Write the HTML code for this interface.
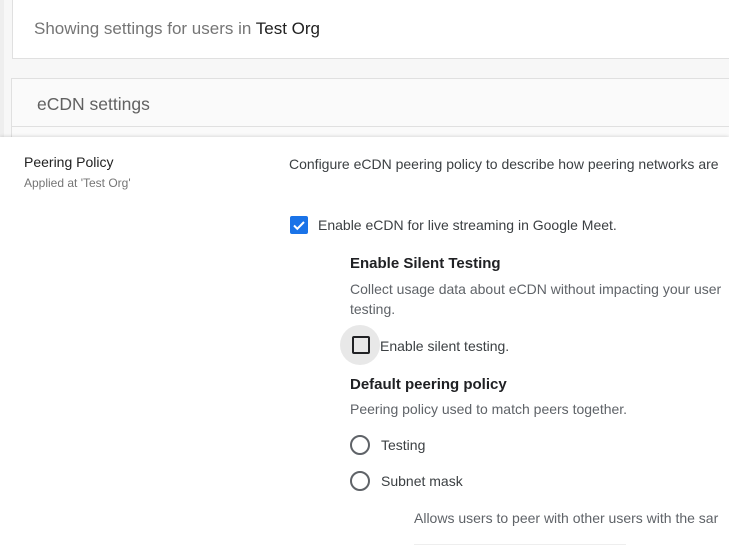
<!DOCTYPE html>
<html><head><style>
body{margin:0;width:729px;height:547px;overflow:hidden;background:#f7f7f7;font-family:"Liberation Sans",Roboto,sans-serif;position:relative}
.edge{position:absolute;left:0;top:0;width:4px;height:140px;background:#eeeeee}
.card1{position:absolute;left:12px;top:-1px;width:730px;height:58px;background:#fff;border:1px solid #e0e0e0}
.card1 span{position:absolute;left:21px;top:19px;font-size:17px;color:#757575}
.card1 b{font-weight:normal;color:#212121}
.card2{position:absolute;left:11px;top:78px;width:730px;height:80px;background:#fafafa;border:1px solid #e0e0e0}
.card2 .h{position:absolute;left:25px;top:15px;font-size:17.5px;color:#616161}
.card2 .line{position:absolute;left:0;top:47px;width:100%;border-top:1px solid #e0e0e0}
.panel{position:absolute;left:0;top:137px;width:729px;height:420px;background:#fff;box-shadow:0 -1px 3px rgba(0,0,0,.12)}
.t{position:absolute;white-space:nowrap}
</style></head><body>
<div class="edge"></div>
<div class="card1"><span>Showing settings for users in <b>Test Org</b></span></div>
<div class="card2"><div class="h">eCDN settings</div><div class="line"></div></div>
<div class="panel">
<div class="t" style="left:24px;top:17px;font-size:14px;color:#212121">Peering Policy</div>
<div class="t" style="left:24px;top:39px;font-size:12px;color:#757575">Applied at 'Test Org'</div>
<div class="t" style="left:289px;top:19px;font-size:14px;color:#3c4043">Configure eCDN peering policy to describe how peering networks are</div>
<div style="position:absolute;left:290px;top:79px;width:18px;height:18px;background:#1a73e8;border-radius:2px">
<svg width="18" height="18"><path d="M4 9.5l3.3 3.3L14 6" fill="none" stroke="#fff" stroke-width="2"/></svg></div>
<div class="t" style="left:318px;top:80px;font-size:14px;color:#3c4043">Enable eCDN for live streaming in Google Meet.</div>
<div class="t" style="left:350px;top:118px;font-size:15px;font-weight:bold;color:#202124">Enable Silent Testing</div>
<div class="t" style="left:350px;top:142px;font-size:14px;color:#5f6368;line-height:20px">Collect usage data about eCDN without impacting your user<br>testing.</div>
<div style="position:absolute;left:340px;top:188px;width:40px;height:40px;border-radius:50%;background:#e8e8e8"></div>
<div style="position:absolute;left:352px;top:199px;width:14px;height:14px;border:2px solid #202124;border-radius:2px"></div>
<div class="t" style="left:380px;top:201px;font-size:14px;color:#3c4043">Enable silent testing.</div>
<div class="t" style="left:350px;top:239px;font-size:15px;font-weight:bold;color:#202124">Default peering policy</div>
<div class="t" style="left:350px;top:264px;font-size:14px;color:#5f6368">Peering policy used to match peers together.</div>
<div style="position:absolute;left:350px;top:298px;width:16px;height:16px;border:2px solid #5f6368;border-radius:50%"></div>
<div class="t" style="left:381px;top:300px;font-size:14px;color:#3c4043">Testing</div>
<div style="position:absolute;left:350px;top:334px;width:16px;height:16px;border:2px solid #5f6368;border-radius:50%"></div>
<div class="t" style="left:381px;top:336px;font-size:14px;color:#3c4043">Subnet mask</div>
<div class="t" style="left:414px;top:373px;font-size:14px;color:#5f6368">Allows users to peer with other users with the sar</div>
<div style="position:absolute;left:414px;top:407px;width:212px;border-top:1px solid #eee"></div>
</div>
</body></html>
